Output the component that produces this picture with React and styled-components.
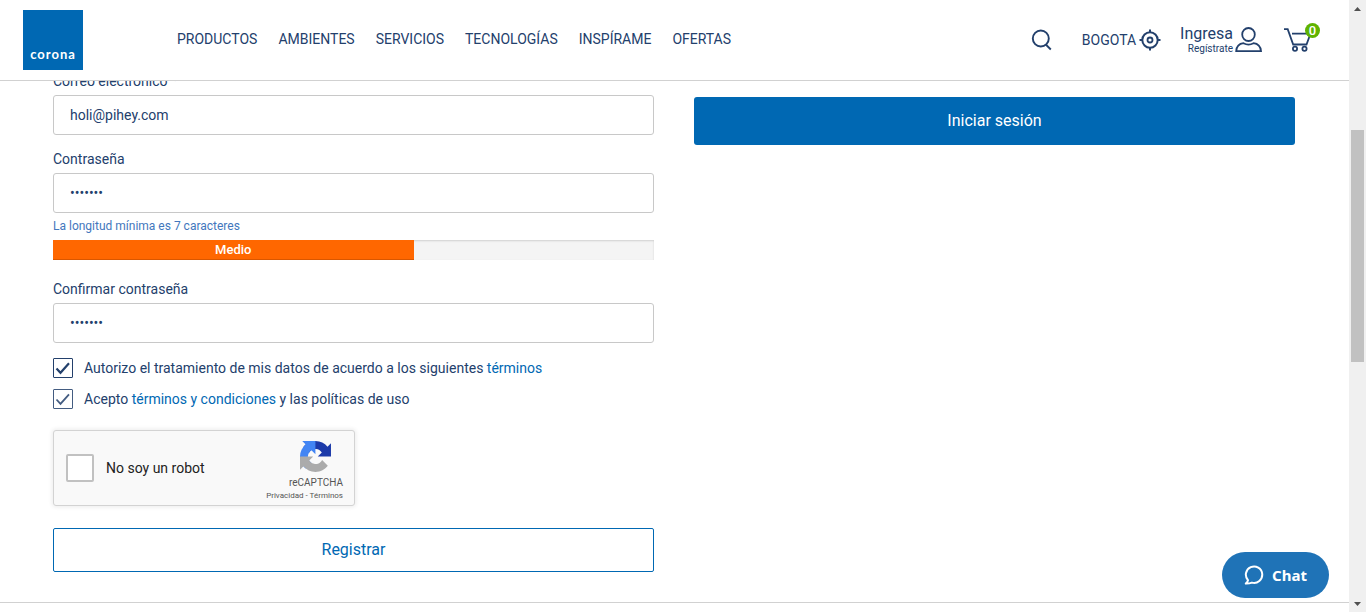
import React, { useState } from "react";
import styled, { createGlobalStyle } from "styled-components";

const navy = "#23406c";
const blue = "#0068b3";

const GlobalStyle = createGlobalStyle`
  * { box-sizing: border-box; }
  body { margin: 0; background: #fff; }
  body, button, input { font-family: Roboto, "Liberation Sans", sans-serif; }
  a { text-decoration: none; }
`;

const Shell = styled.div`
  display: flex;
  height: 100vh;
  overflow: hidden;
  color: ${navy};
  font-size: 14px;
  line-height: 20px;
`;

const Page = styled.div`
  position: relative;
  flex: 1;
  min-width: 0;
  overflow: hidden;
`;

const Header = styled.header`
  position: relative;
  z-index: 1;
  display: flex;
  align-items: center;
  height: 81px;
  padding: 0 29px 0 23px;
  background: #fff;
  border-bottom: 1px solid #d1d1d1;
`;

const Logo = styled.a`
  display: flex;
  align-items: flex-end;
  justify-content: center;
  width: 60px;
  height: 60px;
  padding-bottom: 8px;
  background: ${blue};
  color: #fff;
  font: 700 13px/16px Lato, sans-serif;
  letter-spacing: 1px;
`;

const Nav = styled.nav`
  display: flex;
  flex: 1;
  gap: 21px;
  margin-left: 94px;
  padding-bottom: 2px;
`;

const NavLink = styled.a`
  color: ${navy};
`;

const Tools = styled.div`
  display: flex;
  align-items: center;
`;

const IconButton = styled.button`
  display: flex;
  padding: 0;
  border: 0;
  background: none;
  color: ${navy};
`;

const City = styled.button`
  display: flex;
  align-items: center;
  gap: 3px;
  margin: 0 19px 0 29px;
  padding: 0;
  border: 0;
  background: none;
  color: ${navy};
  font-size: 14px;
`;

const Account = styled.div`
  display: flex;
  align-items: center;
  gap: 2px;
  margin-right: 21px;
`;

const AccountLinks = styled.div`
  display: flex;
  flex-direction: column;
  align-items: flex-end;
`;

const SignIn = styled.a`
  color: ${navy};
  font-size: 16px;
  line-height: 18px;
`;

const SignUp = styled.a`
  color: ${navy};
  font-size: 10px;
  line-height: 12px;
`;

const Cart = styled.button`
  position: relative;
  display: flex;
  width: 36px;
  padding: 0;
  border: 0;
  background: none;
  color: ${navy};
`;

const Badge = styled.span`
  position: absolute;
  top: -5px;
  right: 0;
  width: 15px;
  height: 15px;
  border-radius: 50%;
  background: #5fb300;
  color: #fff;
  font-size: 13px;
  font-weight: 500;
  line-height: 15px;
  text-align: center;
`;

const Main = styled.main`
  display: grid;
  grid-template-columns: 1fr 1fr;
  align-items: start;
  gap: 40px;
  margin-top: -10px;
  padding: 0 54px 30px 53px;
  border-bottom: 1px solid #d1d1d1;
`;

const Form = styled.form`
  display: flex;
  flex-direction: column;
`;

const Field = styled.div`
  display: flex;
  flex-direction: column;
  gap: 4px;
  margin-bottom: ${(p) => p.$space}px;
`;

const Input = styled.input`
  width: 100%;
  height: 40px;
  padding: 0 16px;
  border: 1px solid #c8c8c8;
  border-radius: 3px;
  background: #fff;
  color: ${navy};
  font-size: 14px;
  outline: 0;
`;

const Hint = styled.p`
  margin: 0;
  color: #4377bd;
  font-size: 12px;
  line-height: 18px;
`;

const Meter = styled.div`
  height: 20px;
  margin-bottom: 19px;
  background: #f4f4f4;
  box-shadow: inset 0 1px 2px rgba(0, 0, 0, 0.15);
`;

const MeterFill = styled.div`
  width: 60%;
  height: 100%;
  background: #ff6700;
  box-shadow: inset 0 -1px 0 rgba(0, 0, 0, 0.15);
  color: #fff;
  font-size: 13px;
  font-weight: 500;
  text-align: center;
`;

const Consent = styled.div`
  display: flex;
  align-items: center;
  gap: 11px;
  height: 20px;
  margin-bottom: 11px;
`;

const TickBox = styled.span`
  display: grid;
  width: 20px;
  height: 20px;
  color: ${navy};
  opacity: ${(p) => (p.$soft ? 0.85 : 1)};

  input, svg { grid-area: 1 / 1; }
  svg { pointer-events: none; }
  input:not(:checked) + svg { visibility: hidden; }
`;

const Tick = styled.input`
  appearance: none;
  width: 20px;
  height: 20px;
  margin: 0;
  border: 1px solid ${navy};
  border-radius: 1px;
  background: #fff;
`;

const TextLink = styled.a`
  color: ${blue};
`;

const Captcha = styled.div`
  display: flex;
  align-items: center;
  width: 302px;
  height: 76px;
  margin: 10px 0 22px;
  padding: 0 11px 0 12px;
  border: 1px solid #d3d3d3;
  border-radius: 3px;
  background: #f9f9f9;
  box-shadow: 0 0 4px 1px rgba(0, 0, 0, 0.08);
  color: #222;
`;

const RobotBox = styled.input`
  appearance: none;
  width: 28px;
  height: 28px;
  margin: 0 12px 0 0;
  border: 2px solid #c1c1c1;
  border-radius: 2px;
  background: #fff;
`;

const CaptchaBrand = styled.div`
  display: flex;
  flex-direction: column;
  align-items: flex-end;
  margin-left: auto;
  padding-top: 6px;
  color: #555;

  svg { margin-right: 12px; }
`;

const BrandName = styled.span`
  margin-top: 3px;
  font-size: 10px;
  line-height: 16px;
`;

const BrandLinks = styled.span`
  font-size: 8px;
  line-height: 10px;

  a { color: #555; }
`;

const RegisterButton = styled.button`
  height: 44px;
  padding: 0 0 2px;
  border: 1px solid ${blue};
  border-radius: 2px;
  background: #fff;
  color: ${blue};
  font-size: 16px;
`;

const LoginButton = styled.button`
  width: 100%;
  height: 48px;
  margin-top: 26px;
  padding: 0 0 2px;
  border: 0;
  border-radius: 3px;
  background: ${blue};
  color: #fff;
  font-size: 16px;
`;

const ChatButton = styled.button`
  position: absolute;
  right: 20px;
  bottom: 14px;
  display: flex;
  align-items: center;
  gap: 8px;
  height: 46px;
  padding: 0 22px;
  border: 0;
  border-radius: 23px;
  background: #1f73b7;
  color: #fff;
  font: 700 15px/20px "Noto Sans", sans-serif;
`;

const ScrollTrack = styled.div`
  display: flex;
  flex-direction: column;
  align-items: center;
  width: 17px;
  background: #f0f0f0;
`;

const ScrollSpace = styled.div`
  flex: ${(p) => p.$grow};
`;

const ScrollThumb = styled.div`
  flex: 232;
  width: 13px;
  background: #c1c1c1;
`;

const stroke = { fill: "none", stroke: "currentColor", "aria-hidden": true };

const SearchIcon = () => (
  <svg width="22" height="22" viewBox="0 0 22 22" {...stroke} strokeWidth="1.900">
    <circle cx="9.800" cy="9.500" r="8" />
    <path d="M14.800 15.500l5 5" />
  </svg>
);

const TargetIcon = () => (
  <svg width="22" height="22" viewBox="0 0 22 22" {...stroke} strokeWidth="2">
    <circle cx="11" cy="11" r="7.700" />
    <circle cx="11" cy="11" r="2.500" strokeWidth="1.800" />
    <path d="M11 .5v3.500M11 18v3.500M.5 11h3.500M18 11h3.500" />
  </svg>
);

const UserIcon = () => (
  <svg width="28" height="26" viewBox="0 0 28 26" {...stroke} strokeWidth="1.800">
    <ellipse cx="13.500" cy="7.500" rx="6.300" ry="6.500" />
    <path d="M8.500 16.200C4 16.700 1.500 19.500 1.200 24.200h24.800C25.600 19.500 23 16.700 18.500 16.200c-3 1.600-7 1.600-10 0z" />
  </svg>
);

const CartIcon = () => (
  <svg width="28" height="24" viewBox="0 0 28 24" {...stroke} strokeWidth="1.800">
    <path d="M0 1.200h3.700L9.200 16.500h13.300L26 7M8 5.700h16" />
    <circle cx="11" cy="20.700" r="2.100" />
    <circle cx="20.500" cy="20.700" r="2.100" />
  </svg>
);

const CheckIcon = ({ weight }) => (
  <svg width="20" height="20" viewBox="0 0 20 20" {...stroke} strokeWidth={weight}>
    <path d="M3.500 10.500l4 4.300 8.500-9.500" />
  </svg>
);

const CaptchaIcon = () => (
  <svg width="31" height="31" viewBox="0 0 64 64" aria-hidden="true">
    <path fill="#1c3aa9" d="M64 31.955l-.033-1.370V4.687l-7.160 7.160C50.948 4.674 42.033.093 32.050.093c-10.400 0-19.622 4.960-25.458 12.640l11.736 11.860a15.550 15.550 0 0 1 4.754-5.334c2.050-1.600 4.952-2.906 8.968-2.906.485 0 .860.057 1.135.163 4.976.393 9.288 3.140 11.828 7.124l-8.307 8.307L64 31.953" />
    <path fill="#4285f4" d="M31.862.094l-1.370.033H4.594l7.160 7.160C4.580 13.147 0 22.060 0 32.046c0 10.400 4.960 19.622 12.640 25.458L24.500 45.768a15.550 15.550 0 0 1-5.334-4.754c-1.600-2.050-2.906-4.952-2.906-8.968 0-.485.057-.860.163-1.135.393-4.976 3.140-9.288 7.124-11.828l8.307 8.307L31.862.095" />
    <path fill="#ababab" d="M.001 32.045l.033 1.370v25.898l7.160-7.160c5.860 7.173 14.774 11.754 24.760 11.754 10.400 0 19.622-4.960 25.458-12.640l-11.736-11.860a15.550 15.550 0 0 1-4.754 5.334c-2.050 1.600-4.952 2.906-8.968 2.906-.485 0-.860-.057-1.135-.163-4.976-.393-9.288-3.140-11.828-7.124l8.307-8.307-37.297.001" />
  </svg>
);

const ChatIcon = () => (
  <svg width="20" height="20" viewBox="0 0 20 20" {...stroke} strokeWidth="2">
    <path d="M4 15.200A8.200 8.200 0 1 1 8 17.600c-2 .8-4 1.100-6.200 1 1-.9 1.900-2 2.200-3.400z" strokeLinejoin="round" />
  </svg>
);

const Arrow = ({ down }) => (
  <svg width="17" height="17" viewBox="0 0 17 17" aria-hidden="true">
    <path fill="#505050" d={down ? "M5 7h7l-3.500 4z" : "M5 11h7L8.500 7z"} />
  </svg>
);

const sections = ["PRODUCTOS", "AMBIENTES", "SERVICIOS", "TECNOLOGÍAS", "INSPÍRAME", "OFERTAS"];

function TextField({ id, label, type, initial, space, children }) {
  const [value, setValue] = useState(initial);
  return (
    <Field $space={space}>
      <label htmlFor={id}>{label}</label>
      <Input id={id} type={type} value={value} onChange={(e) => setValue(e.target.value)} />
      {children}
    </Field>
  );
}

export default function App() {
  return (
    <Shell>
      <GlobalStyle />
      <Page>
        <Header>
          <Logo href="#">corona</Logo>
          <Nav>
            {sections.map((name) => (
              <NavLink key={name} href="#">{name}</NavLink>
            ))}
          </Nav>
          <Tools>
            <IconButton type="button" aria-label="Buscar"><SearchIcon /></IconButton>
            <City type="button">BOGOTA<TargetIcon /></City>
            <Account>
              <AccountLinks>
                <SignIn href="#">Ingresa</SignIn>
                <SignUp href="#">Regístrate</SignUp>
              </AccountLinks>
              <UserIcon />
            </Account>
            <Cart type="button" aria-label="Carrito"><CartIcon /><Badge>0</Badge></Cart>
          </Tools>
        </Header>
        <Main>
          <Form onSubmit={(e) => e.preventDefault()}>
            <TextField id="email" label="Correo electrónico *" type="email" initial="holi@pihey.com" space={14} />
            <TextField id="password" label="Contraseña" type="password" initial="abcdefg" space={5}>
              <Hint>La longitud mínima es 7 caracteres</Hint>
            </TextField>
            <Meter><MeterFill>Medio</MeterFill></Meter>
            <TextField id="confirm" label="Confirmar contraseña" type="password" initial="abcdefg" space={15} />
            <Consent>
              <TickBox><Tick id="data" type="checkbox" defaultChecked /><CheckIcon weight={2.2} /></TickBox>
              <label htmlFor="data">
                Autorizo el tratamiento de mis datos de acuerdo a los siguientes <TextLink href="#">términos</TextLink>
              </label>
            </Consent>
            <Consent>
              <TickBox $soft><Tick id="terms" type="checkbox" defaultChecked /><CheckIcon weight={1.8} /></TickBox>
              <label htmlFor="terms">
                Acepto <TextLink href="#">términos y condiciones</TextLink> y las políticas de uso
              </label>
            </Consent>
            <Captcha>
              <RobotBox id="robot" type="checkbox" />
              <label htmlFor="robot">No soy un robot</label>
              <CaptchaBrand>
                <CaptchaIcon />
                <BrandName>reCAPTCHA</BrandName>
                <BrandLinks><a href="#">Privacidad</a> - <a href="#">Términos</a></BrandLinks>
              </CaptchaBrand>
            </Captcha>
            <RegisterButton type="submit">Registrar</RegisterButton>
          </Form>
          <LoginButton type="button">Iniciar sesión</LoginButton>
        </Main>
        <ChatButton type="button"><ChatIcon />Chat</ChatButton>
      </Page>
      <ScrollTrack aria-hidden="true">
        <Arrow />
        <ScrollSpace $grow={113} />
        <ScrollThumb />
        <ScrollSpace $grow={233} />
        <Arrow down />
      </ScrollTrack>
    </Shell>
  );
}
